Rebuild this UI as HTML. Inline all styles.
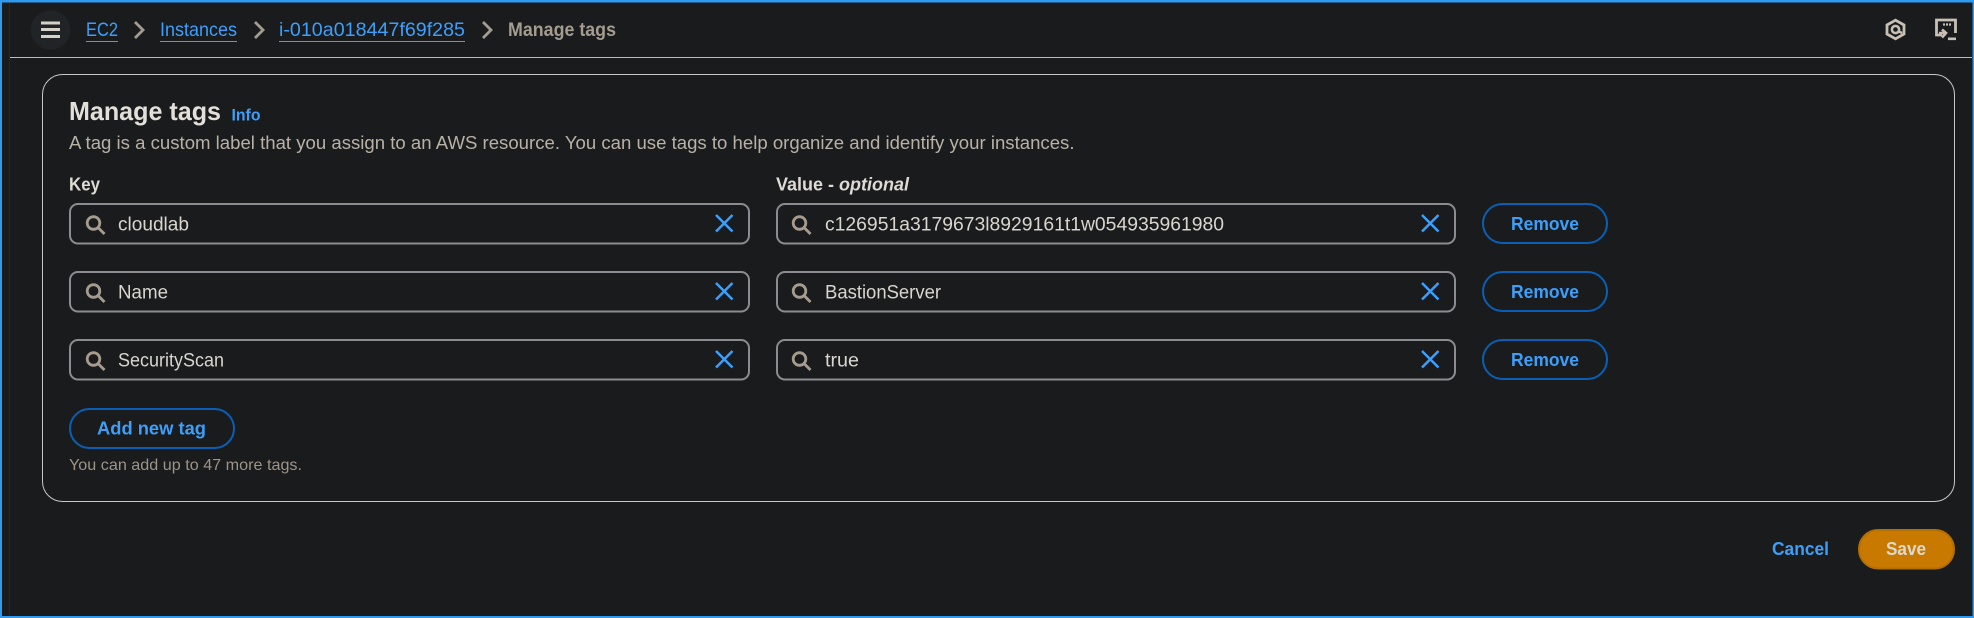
<!DOCTYPE html>
<html lang="en">
<head>
<meta charset="utf-8">
<title>Manage tags</title>
<style>
html,body{margin:0;padding:0;width:1974px;height:618px;overflow:hidden;background:#1a1b1d}
svg{display:block}
text{font-family:"Liberation Sans",sans-serif}
.b{font-weight:700}
.lnk{fill:#3d9ffa}
.inp{fill:#1a1b1d;stroke:#8c8c90;stroke-width:2}
.btn{fill:#1a1b1d;stroke:#0a5fb5;stroke-width:2}
.val{fill:#d9d5cf;font-size:19px}
.rm{fill:#3d9ffa;font-size:18px;font-weight:700}
.s{fill:none;stroke:#a59c8f;stroke-width:2.8}
.x{fill:none;stroke:#3d9ffa;stroke-width:2.500}
</style>
</head>
<body>
<svg width="1974" height="618" viewBox="0 0 1974 618" xmlns="http://www.w3.org/2000/svg">
<defs>
<g id="sr"><circle cx="93.500" cy="223" r="6.300" class="s"/><path d="M98.500 228 L104.500 234" class="s"/></g>
<path id="xi" d="M716 215 L732.500 231.500 M732.500 215 L716 231.500" class="x"/>
<path id="ch" d="M135 22 L143 30 L135 38" fill="none" stroke="#a59c90" stroke-width="2.800"/>
</defs>
<rect width="1974" height="618" fill="#1a1b1d"/>
<rect x="9" y="2" width="1" height="614" fill="#26272a"/>
<rect x="10" y="57" width="1962" height="1" fill="#bdbdbd"/>

<!-- header -->
<circle cx="50.500" cy="30" r="19.800" fill="#212426"/>
<path d="M41 23H60M41 29.500H60M41 36.500H60" stroke="#d6d1c8" stroke-width="3" fill="none"/>
<text x="86" y="36" font-size="19.500" class="lnk" textLength="32" lengthAdjust="spacingAndGlyphs">EC2</text>
<rect x="86" y="41" width="32" height="1" fill="#3d9ffa"/>
<use href="#ch"/>
<text x="160" y="36" font-size="19.500" class="lnk" textLength="77" lengthAdjust="spacingAndGlyphs">Instances</text>
<rect x="160" y="41" width="77" height="1" fill="#3d9ffa"/>
<use href="#ch" x="120"/>
<text x="279" y="36" font-size="19.500" class="lnk" textLength="186" lengthAdjust="spacingAndGlyphs">i-010a018447f69f285</text>
<rect x="279" y="41" width="186" height="1" fill="#3d9ffa"/>
<use href="#ch" x="348"/>
<text x="508" y="36" font-size="19" class="b" fill="#a59c90" textLength="108" lengthAdjust="spacingAndGlyphs">Manage tags</text>

<!-- top right icons -->
<path d="M1895.500 20.200 L1904 25 L1904 34 L1895.500 38.800 L1887 34 L1887 25 Z" fill="none" stroke="#c8c0b4" stroke-width="2.800"/>
<circle cx="1895.500" cy="29.500" r="3.600" fill="none" stroke="#c8c0b4" stroke-width="2.600"/>
<path d="M1898 31 L1902 33" stroke="#c8c0b4" stroke-width="2.400"/>
<path d="M1942 35 H1936.500 V20 H1955.500 V33" fill="none" stroke="#c8c0b4" stroke-width="2.800"/>
<path d="M1943 24.500H1945M1946 24.500H1948M1949 24.500H1951" stroke="#c8c0b4" stroke-width="2.200"/>
<path d="M1939 33 H1946 M1942 29.500 L1946 33 L1942 37.500" fill="none" stroke="#c8c0b4" stroke-width="2.600"/>
<rect x="1948" y="37.500" width="8" height="2.600" fill="#c8c0b4"/>

<!-- card -->
<rect x="42.500" y="74.500" width="1912" height="427" rx="20" fill="#1a1b1d" stroke="#c8c8c8" stroke-width="1"/>
<text x="69" y="120" font-size="26" class="b" fill="#e3e0da" textLength="152" lengthAdjust="spacingAndGlyphs">Manage tags</text>
<text x="231.500" y="120.500" font-size="16.500" class="b lnk" textLength="29" lengthAdjust="spacingAndGlyphs">Info</text>
<text x="69" y="149" font-size="18.500" fill="#b8b1a6" textLength="1005.500" lengthAdjust="spacingAndGlyphs">A tag is a custom label that you assign to an AWS resource. You can use tags to help organize and identify your instances.</text>
<text x="69" y="190.500" font-size="18" class="b" fill="#dedbd5" textLength="31" lengthAdjust="spacingAndGlyphs">Key</text>
<text x="776" y="190.500" font-size="18" fill="#dedbd5" textLength="133" lengthAdjust="spacingAndGlyphs"><tspan class="b">Value - </tspan><tspan class="b" font-style="italic">optional</tspan></text>

<!-- row 1 -->
<rect x="70" y="204" width="679" height="39.500" rx="8" class="inp"/>
<use href="#sr"/>
<text x="118" y="230.500" class="val" textLength="71" lengthAdjust="spacingAndGlyphs">cloudlab</text>
<use href="#xi"/>
<rect x="777" y="204" width="678" height="39.500" rx="8" class="inp"/>
<use href="#sr" x="706"/>
<text x="825" y="230.500" class="val" textLength="399" lengthAdjust="spacingAndGlyphs">c126951a3179673l8929161t1w054935961980</text>
<use href="#xi" x="706"/>
<rect x="1483" y="204" width="124" height="39" rx="19.500" class="btn"/>
<text x="1511" y="230" class="rm" textLength="68" lengthAdjust="spacingAndGlyphs">Remove</text>

<!-- row 2 -->
<g transform="translate(0,68)">
<rect x="70" y="204" width="679" height="39.500" rx="8" class="inp"/>
<use href="#sr"/>
<text x="118" y="230.500" class="val" textLength="50" lengthAdjust="spacingAndGlyphs">Name</text>
<use href="#xi"/>
<rect x="777" y="204" width="678" height="39.500" rx="8" class="inp"/>
<use href="#sr" x="706"/>
<text x="825" y="230.500" class="val" textLength="116" lengthAdjust="spacingAndGlyphs">BastionServer</text>
<use href="#xi" x="706"/>
<rect x="1483" y="204" width="124" height="39" rx="19.500" class="btn"/>
<text x="1511" y="230" class="rm" textLength="68" lengthAdjust="spacingAndGlyphs">Remove</text>
</g>

<!-- row 3 -->
<g transform="translate(0,136)">
<rect x="70" y="204" width="679" height="39.500" rx="8" class="inp"/>
<use href="#sr"/>
<text x="118" y="230.500" class="val" textLength="106" lengthAdjust="spacingAndGlyphs">SecurityScan</text>
<use href="#xi"/>
<rect x="777" y="204" width="678" height="39.500" rx="8" class="inp"/>
<use href="#sr" x="706"/>
<text x="825" y="230.500" class="val" textLength="34" lengthAdjust="spacingAndGlyphs">true</text>
<use href="#xi" x="706"/>
<rect x="1483" y="204" width="124" height="39" rx="19.500" class="btn"/>
<text x="1511" y="230" class="rm" textLength="68" lengthAdjust="spacingAndGlyphs">Remove</text>
</g>

<!-- add -->
<rect x="70" y="409" width="164" height="39" rx="19.500" class="btn"/>
<text x="97" y="434.500" font-size="18.500" class="b lnk" textLength="109" lengthAdjust="spacingAndGlyphs">Add new tag</text>
<text x="69" y="470" font-size="16" fill="#9d9488" textLength="233" lengthAdjust="spacingAndGlyphs">You can add up to 47 more tags.</text>

<!-- footer -->
<text x="1772" y="555" font-size="18.500" class="b lnk" textLength="57" lengthAdjust="spacingAndGlyphs">Cancel</text>
<rect x="1859" y="530" width="95" height="38.500" rx="19" fill="#c87a00" stroke="#b46e04" stroke-width="2"/>
<text x="1886" y="555" font-size="18.500" class="b" fill="#dcd8d2" textLength="40" lengthAdjust="spacingAndGlyphs">Save</text>

<!-- outer window border -->
<rect x="0" y="0" width="1974" height="2.500" fill="#2f9bf0"/>
<rect x="0" y="0" width="2" height="618" fill="#2f9bf0"/>
<rect x="1972.500" y="0" width="1.500" height="618" fill="#2f9bf0"/>
<rect x="0" y="616" width="1974" height="2" fill="#2f9bf0"/>
</svg>
</body>
</html>
